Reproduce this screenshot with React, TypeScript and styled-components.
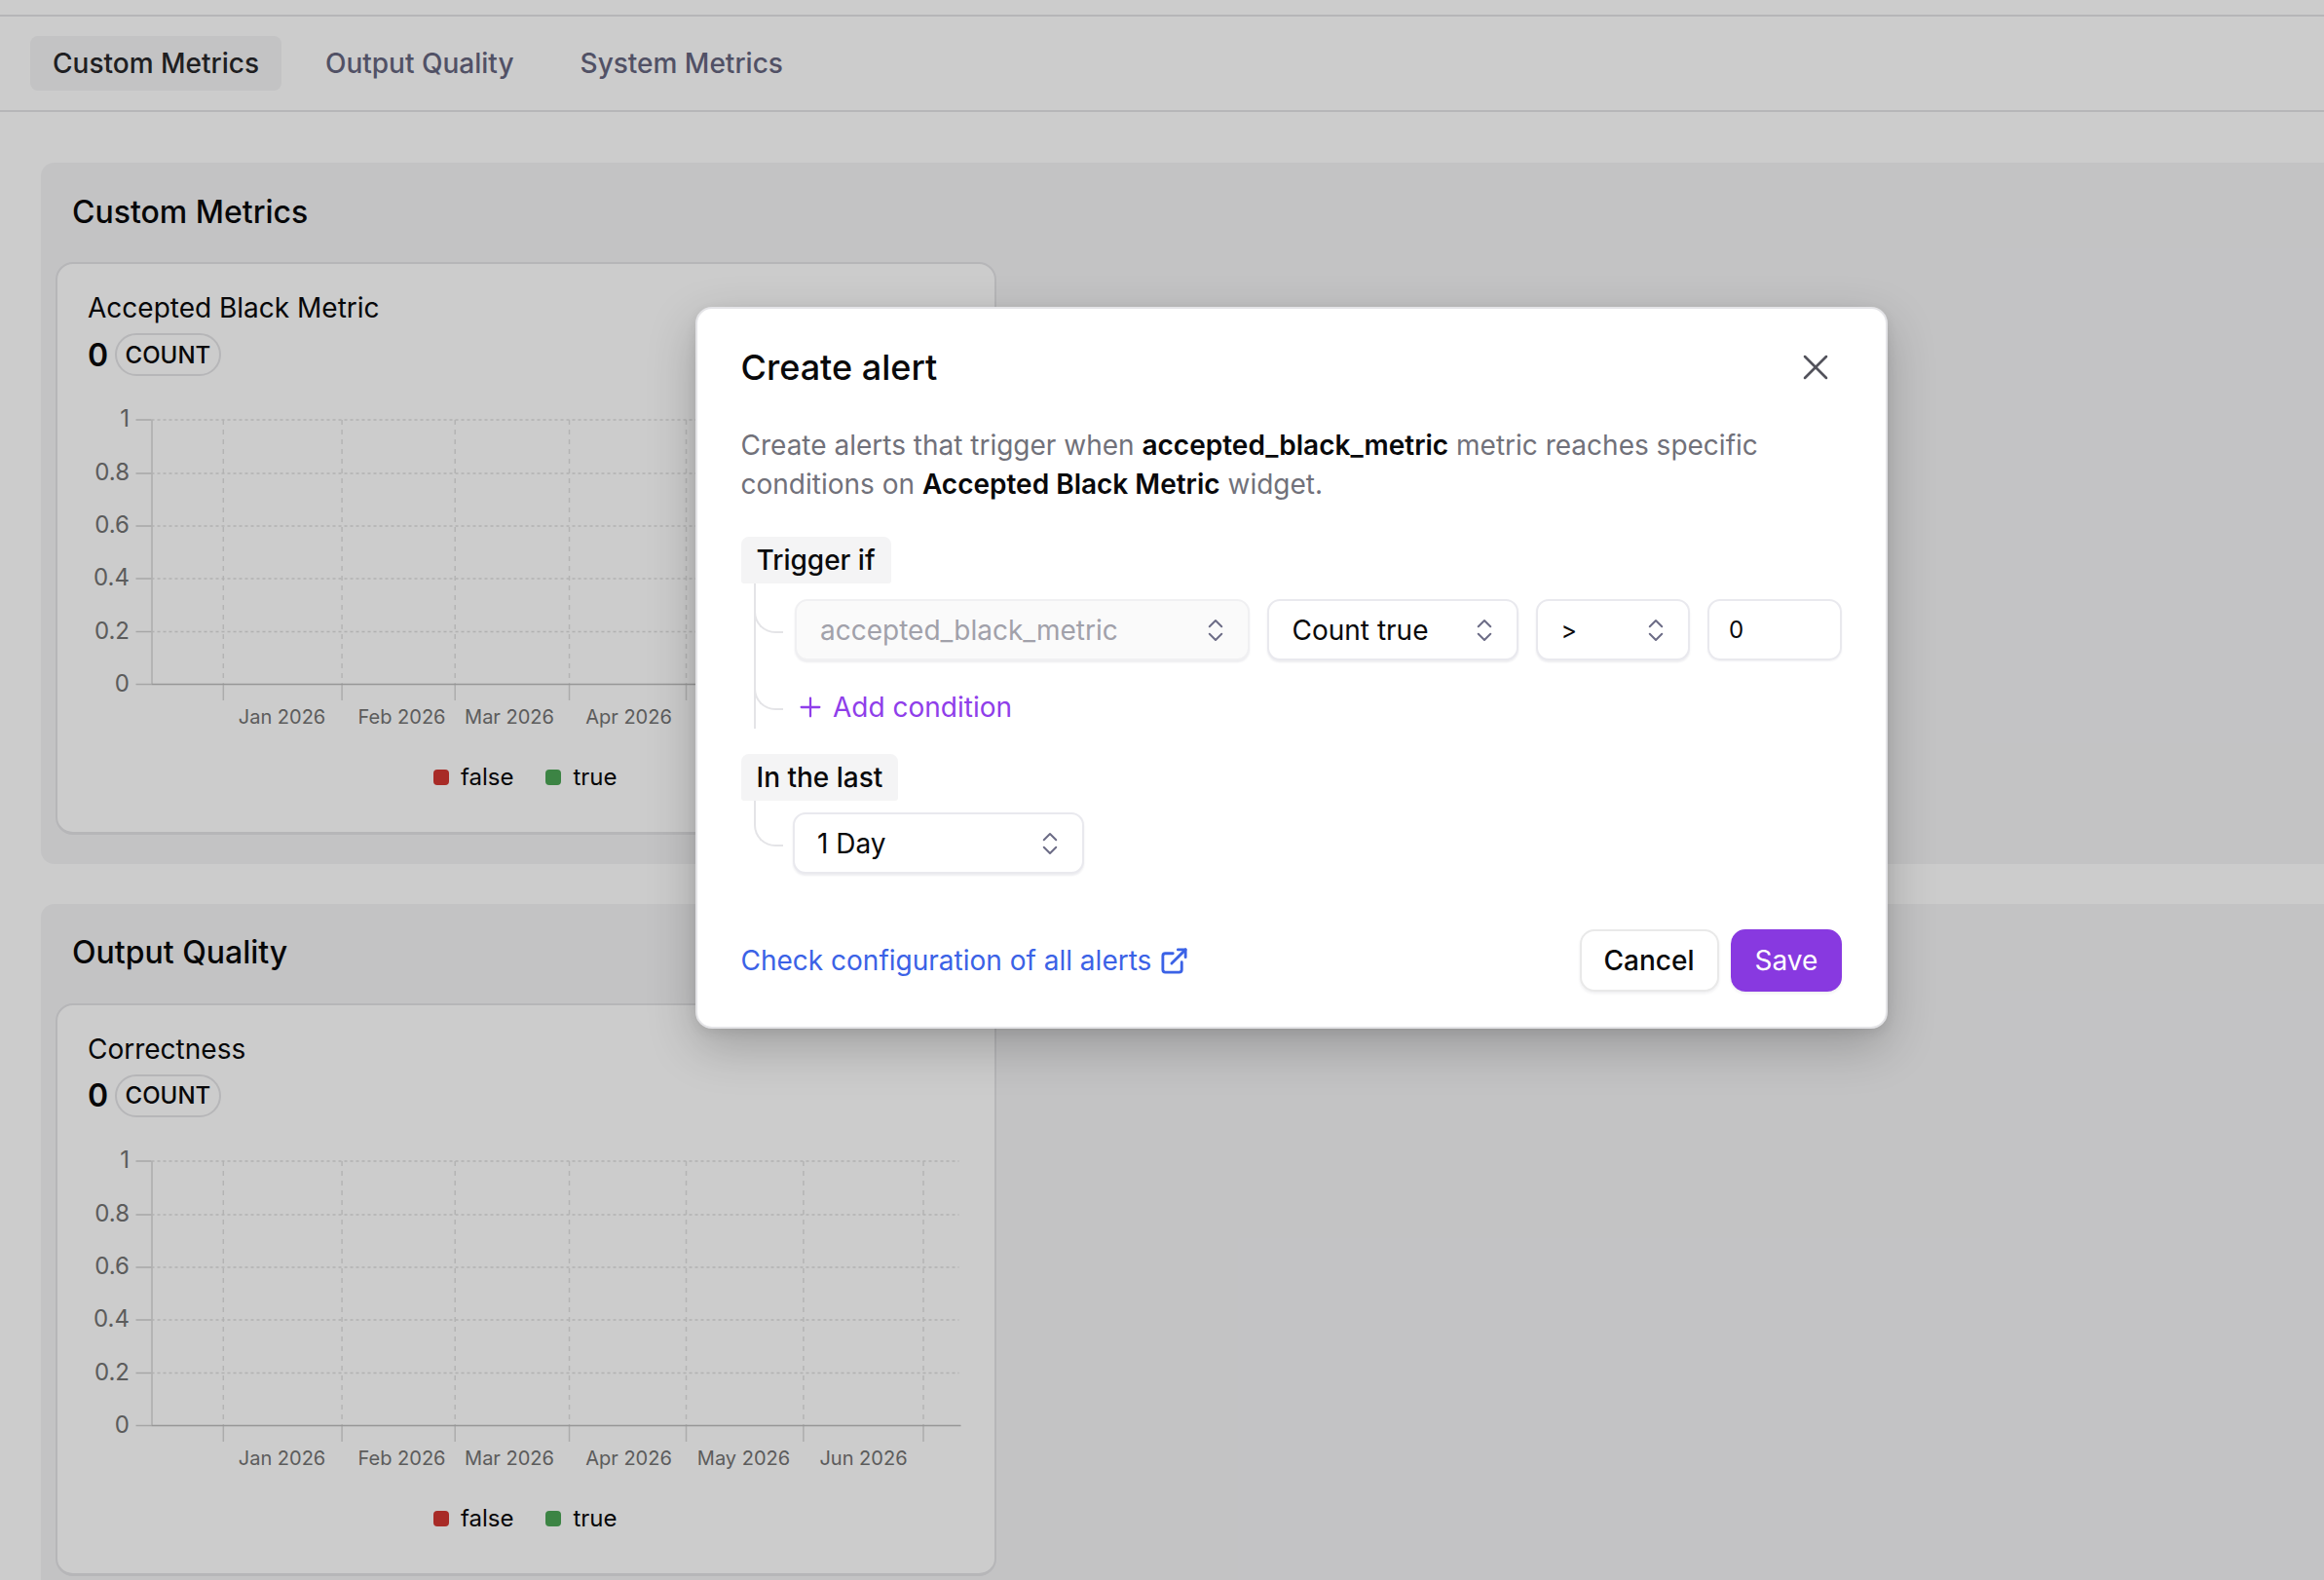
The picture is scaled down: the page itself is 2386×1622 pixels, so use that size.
import React from "react";
import styled, { createGlobalStyle } from "styled-components";
import { ChevronsUpDown, X, Plus, ExternalLink } from "lucide-react";

const Global = createGlobalStyle`
  html, body { margin: 0; height: 100%; overflow: hidden; background: #fff; }
  #root { height: 100%; }
  * { box-sizing: border-box; }
  body { font-family: Inter, "Liberation Sans", sans-serif; color: #09090b; }
`;

const Page = styled.div`
  position: relative;
  width: 2386px;
  height: 1622px;
  overflow: hidden;
  background: #fff;
`;
const TopStrip = styled.div`
  height: 17px;
  border-bottom: 2px solid #e4e4e7;
`;
const TabBar = styled.nav`
  display: flex;
  align-items: center;
  gap: 22px;
  height: 98px;
  padding: 0 31px;
  border-bottom: 2px solid #e4e4e7;
`;
const Tab = styled.div<{ $active?: boolean }>`
  display: flex;
  align-items: center;
  height: 56px;
  padding: 0 23px;
  border-radius: 8px;
  font-size: 28px;
  font-weight: 500;
  white-space: nowrap;
  background: ${(p) => (p.$active ? "#f4f4f5" : "transparent")};
  color: ${(p) => (p.$active ? "#27272a" : "#66667f")};
`;
const Main = styled.main`
  display: flex;
  flex-direction: column;
  gap: 40.5px;
  padding: 52px 0 0 42px;
  margin-right: -40px;
`;
const Section = styled.section`
  padding: 0 0 30px 14.5px;
  background: #f4f4f6;
  border-radius: 14px;
`;
const SectionTitle = styled.h2`
  margin: 0;
  padding: 29.5px 0 30.5px 17.5px;
  font-size: 32px;
  line-height: 42px;
  font-weight: 500;
  color: #09090b;
`;
const Widget = styled.article`
  width: 966.5px;
  height: 588px;
  padding: 27px 0 0 31.5px;
  background: #fff;
  border: 2px solid #e4e4e7;
  border-bottom-width: 3px;
  border-radius: 18px;
`;
const WidgetTitle = styled.h3`
  margin: 0;
  width: fit-content;
  font-size: 28px;
  line-height: 36px;
  font-weight: 400;
`;
const ValueRow = styled.div`
  display: flex;
  align-items: center;
  gap: 7px;
  margin-top: 8px;
`;
const Value = styled.span`
  font-size: 32px;
  font-weight: 600;
`;
const Badge = styled.span`
  display: flex;
  align-items: center;
  height: 44px;
  padding: 0 8.5px;
  border: 2px solid #e4e4e7;
  border-radius: 22px;
  font-size: 24px;
  font-weight: 500;
`;
const ChartSvg = styled.svg`
  display: block;
  margin-top: 14px;
`;
const Legend = styled.div`
  display: flex;
  justify-content: flex-start;
  gap: 33px;
  margin: 34px 0 0 355px;
`;
const LegendItem = styled.div`
  display: flex;
  align-items: center;
  gap: 12px;
  font-size: 24px;
  line-height: 28px;
`;
const Swatch = styled.i<{ $color: string }>`
  display: block;
  width: 16px;
  height: 16px;
  border-radius: 4px;
  background: ${(p) => p.$color};
`;
const Overlay = styled.div`
  position: absolute;
  inset: 0;
  background: rgba(0, 0, 0, 0.2);
`;
const Modal = styled.div`
  position: absolute;
  left: 714px;
  top: 315px;
  width: 1223.5px;
  height: 741px;
  padding: 38px 44.5px 0 44.5px;
  background: #fff;
  border: 2px solid #e4e4e7;
  border-radius: 17px;
  box-shadow: 0 18px 50px rgba(0, 0, 0, 0.22), 0 4px 12px rgba(0, 0, 0, 0.07);
`;
const ModalHeader = styled.header`
  display: flex;
  align-items: center;
  justify-content: space-between;
  height: 44px;
`;
const ModalTitle = styled.h1`
  margin: 0;
  font-size: 36px;
  line-height: 44px;
  font-weight: 500;
`;
const CloseBtn = styled.span`
  display: flex;
  margin-right: 5.5px;
  color: #52525b;
`;
const Description = styled.p`
  margin: 38px 0 0;
  font-size: 28px;
  line-height: 40px;
  color: #71717a;
  width: 1100px;
  b {
    font-weight: 600;
    color: #09090b;
  }
`;
const Group = styled.div<{ $line?: boolean; $top: number }>`
  position: relative;
  margin-top: ${(p) => p.$top}px;
  &::before {
    content: "";
    display: ${(p) => (p.$line ? "block" : "none")};
    position: absolute;
    left: 13px;
    top: 48px;
    bottom: 0;
    border-left: 2px solid #e4e4e7;
  }
`;
const TriggerGroup = styled(Group)`
  height: 197px;
`;
const GroupLabel = styled.div`
  display: inline-flex;
  align-items: center;
  height: 48px;
  padding: 0 16px;
  border-radius: 8px 8px 3px 3px;
  background: #f4f4f5;
  font-size: 28px;
  font-weight: 500;
  vertical-align: top;
`;
const TreeRow = styled.div<{ $ml: number; $top: number; $h: number; $cy: number }>`
  position: relative;
  display: flex;
  align-items: center;
  justify-content: space-between;
  margin: ${(p) => p.$top}px 0 0 ${(p) => p.$ml}px;
  height: ${(p) => p.$h}px;
  &::before {
    content: "";
    position: absolute;
    left: ${(p) => 13 - p.$ml}px;
    top: ${(p) => -p.$cy}px;
    width: 28px;
    height: ${(p) => p.$cy + p.$h / 2 + 1}px;
    border-left: 2px solid #e4e4e7;
    border-bottom: 2px solid #e4e4e7;
    border-bottom-left-radius: 22px;
  }
`;
const Select = styled.div<{ $width: number; $disabled?: boolean }>`
  display: flex;
  align-items: center;
  justify-content: space-between;
  width: ${(p) => p.$width}px;
  height: 63px;
  padding: 0 18px 0 ${(p) => (p.$disabled ? 24 : 23.5)}px;
  background: ${(p) => (p.$disabled ? "#fafafa" : "#fff")};
  color: ${(p) => (p.$disabled ? "#a1a1aa" : "#09090b")};
  border: 2px solid ${(p) => (p.$disabled ? "#f0f0f2" : "#e9e9ee")};
  border-radius: 13px;
  box-shadow: 0 2px 2px rgba(24, 24, 60, 0.08);
  font-size: 28px;
  white-space: nowrap;
  svg {
    color: #6c6c86;
    flex: none;
  }
`;
const SmallValue = styled.span`
  font-size: 25px;
`;
const NumberField = styled.div`
  display: flex;
  align-items: center;
  width: 138px;
  height: 63px;
  padding-left: 20px;
  border: 2px solid #e9e9ee;
  border-radius: 13px;
  box-shadow: 0 1px 2px rgba(24, 24, 60, 0.06);
  font-size: 24px;
`;
const AddCondition = styled.div`
  display: flex;
  align-items: center;
  gap: 7px;
  margin-left: 0;
  color: #8f3eea;
  font-size: 28px;
  white-space: nowrap;
`;
const Footer = styled.footer`
  display: flex;
  align-items: center;
  justify-content: space-between;
  margin-top: 57px;
`;
const HelpLink = styled.a`
  display: flex;
  align-items: center;
  gap: 8px;
  color: #3b62e6;
  font-size: 28px;
  svg {
    flex: none;
  }
`;
const Actions = styled.div`
  display: flex;
  gap: 12.5px;
`;
const Button = styled.button<{ $primary?: boolean; $width: number }>`
  width: ${(p) => p.$width}px;
  height: 64px;
  padding: 0;
  font-family: inherit;
  font-size: 28px;
  font-weight: ${(p) => (p.$primary ? 400 : 450)};
  border-radius: 15px;
  border: 2px solid ${(p) => (p.$primary ? "#8839e0" : "#e9e9e9")};
  background: ${(p) => (p.$primary ? "#8839e0" : "#fff")};
  color: ${(p) => (p.$primary ? "#fff" : "#09090b")};
  box-shadow: 0 2px 3px rgba(24, 24, 60, 0.07);
`;

const yTicks = [
  { label: "1", y: 0 },
  { label: "0.8", y: 55 },
  { label: "0.6", y: 109 },
  { label: "0.4", y: 163 },
  { label: "0.2", y: 217.5 },
  { label: "0", y: 271.5 },
];
const gridX = [228.8, 350.6, 466.7, 584, 704, 824.4, 947.5];
const months = [
  { label: "Jan 2026", x: 289 },
  { label: "Feb 2026", x: 412 },
  { label: "Mar 2026", x: 522.5 },
  { label: "Apr 2026", x: 645 },
  { label: "May 2026", x: 763 },
  { label: "Jun 2026", x: 886 },
];

function Chart() {
  const ox = 89.5;
  const oy = 31;
  return (
    <ChartSvg width={900} height={350} viewBox="0 0 900 350" fontFamily="Inter, sans-serif">
      <g transform={`translate(${-ox} ${oy})`}>
        {gridX.map((x) => (
          <line key={x} x1={x} x2={x} y1={0} y2={271.5} stroke="#e2e2e2" strokeWidth={1.5} strokeDasharray="5 5" />
        ))}
        {gridX.map((x) => (
          <line key={x} x1={x} x2={x} y1={271.5} y2={288} stroke="#d8d8d8" strokeWidth={1.5} />
        ))}
        <line x1={155.5} x2={155.5} y1={0} y2={271.5} stroke="#d8d8d8" strokeWidth={1.5} />
        {yTicks.map((t) => (
          <g key={t.label}>
            <line x1={139} x2={155} y1={t.y} y2={t.y} stroke="#d0d0d0" strokeWidth={1.5} />
            <line
              x1={155}
              x2={t.label === "0" ? 986 : 984}
              y1={t.y}
              y2={t.y}
              stroke={t.label === "0" ? "#bdbdbd" : "#dedede"}
              strokeWidth={1.6}
              strokeDasharray={t.label === "0" ? undefined : "3 3"}
            />
            <text x={132.5} y={t.y + 7} textAnchor="end" fontSize={24} fill="#737373">
              {t.label}
            </text>
          </g>
        ))}
        {months.map((m) => (
          <text key={m.label} x={m.x} y={312} textAnchor="middle" fontSize={20} fill="#737373">
            {m.label}
          </text>
        ))}
      </g>
    </ChartSvg>
  );
}

function MetricWidget({ title }: { title: string }) {
  return (
    <Widget>
      <WidgetTitle>{title}</WidgetTitle>
      <ValueRow>
        <Value>0</Value>
        <Badge>COUNT</Badge>
      </ValueRow>
      <Chart />
      <Legend>
        <LegendItem>
          <Swatch $color="#d33631" />
          false
        </LegendItem>
        <LegendItem>
          <Swatch $color="#4ca655" />
          true
        </LegendItem>
      </Legend>
    </Widget>
  );
}

const Updown = () => <ChevronsUpDown size={30} strokeWidth={1.6} />;

export default function App() {
  return (
    <Page>
      <Global />
      <TopStrip />
      <TabBar>
        <Tab $active>Custom Metrics</Tab>
        <Tab>Output Quality</Tab>
        <Tab>System Metrics</Tab>
      </TabBar>
      <Main>
        <Section>
          <SectionTitle>Custom Metrics</SectionTitle>
          <MetricWidget title="Accepted Black Metric" />
        </Section>
        <Section>
          <SectionTitle>Output Quality</SectionTitle>
          <MetricWidget title="Correctness" />
        </Section>
      </Main>
      <Overlay />
      <Modal>
        <ModalHeader>
          <ModalTitle>Create alert</ModalTitle>
          <CloseBtn>
            <X size={44} strokeWidth={1.4} />
          </CloseBtn>
        </ModalHeader>
        <Description>
          Create alerts that trigger when <b>accepted_black_metric</b> metric reaches specific conditions on{" "}
          <b>Accepted Black Metric</b> widget.
        </Description>
        <TriggerGroup $line $top={34}>
          <GroupLabel>Trigger if</GroupLabel>
          <TreeRow $ml={55.5} $top={16} $h={63} $cy={16}>
            <Select $width={467} $disabled>
              accepted_black_metric
              <Updown />
            </Select>
            <Select $width={258}>
              Count true
              <Updown />
            </Select>
            <Select $width={158}>
              <SmallValue>&gt;</SmallValue>
              <Updown />
            </Select>
            <NumberField>0</NumberField>
          </TreeRow>
          <TreeRow $ml={55.5} $top={28} $h={40} $cy={20}>
            <AddCondition>
              <Plus size={32} strokeWidth={1.7} />
              Add condition
            </AddCondition>
          </TreeRow>
        </TriggerGroup>
        <Group $top={26}>
          <GroupLabel>In the last</GroupLabel>
          <TreeRow $ml={53} $top={12} $h={63} $cy={12}>
            <Select $width={299.5}>
              1 Day
              <Updown />
            </Select>
          </TreeRow>
        </Group>
        <Footer>
          <HelpLink>
            Check configuration of all alerts
            <ExternalLink size={31} strokeWidth={2.2} />
          </HelpLink>
          <Actions>
            <Button $width={143}>Cancel</Button>
            <Button $primary $width={114}>
              Save
            </Button>
          </Actions>
        </Footer>
      </Modal>
    </Page>
  );
}
